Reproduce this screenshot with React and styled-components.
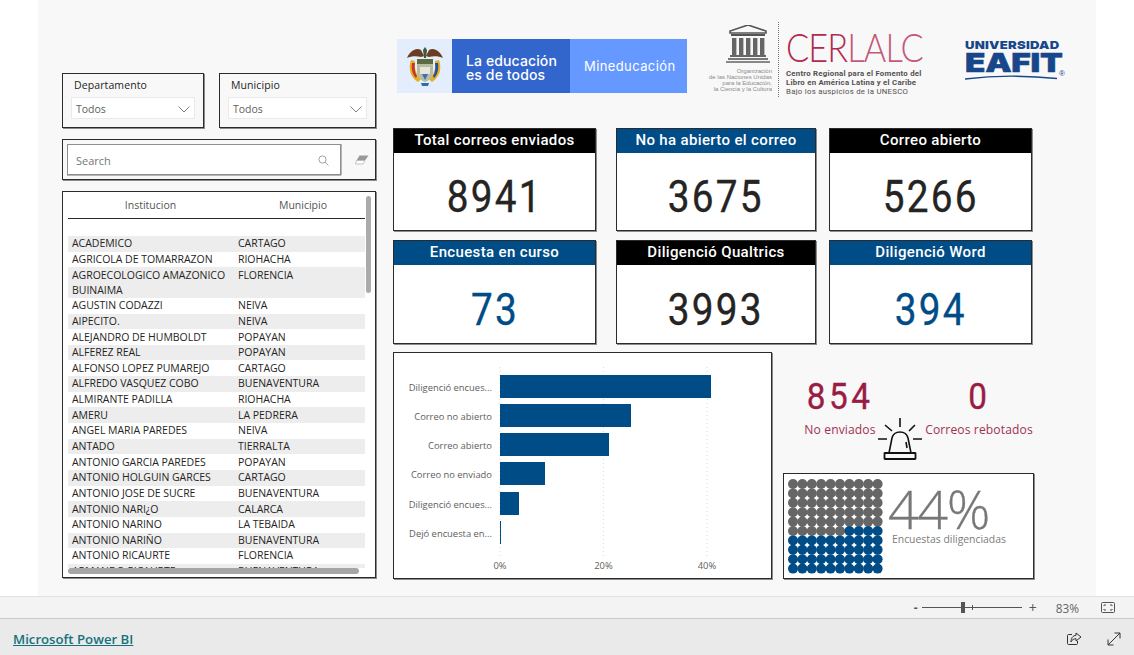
import React from "react";
import styled, { createGlobalStyle } from "styled-components";

const Global = createGlobalStyle`
  html, body { margin: 0; padding: 0; background: #fff; }
  body { font-family: "Open Sans", "Noto Sans", sans-serif; overflow: hidden; }
  * { box-sizing: border-box; }
`;

const BLUE = "#004c87";
const INK = "#252423";
const CRIMSON = "#9b1c43";
const DIN = `"Roboto", "Liberation Sans", sans-serif`;

const Page = styled.div`
  width: 1134px; height: 655px; display: flex; flex-direction: column; overflow: hidden;
`;
const ReportArea = styled.div`height: 596px; flex: none; background: #fff; padding: 0 38px;`;
const Canvas = styled.div`
  width: 1058px; height: 596px; background: #f8f8f8; padding-left: 24px;
  display: grid; grid-template-columns: 314px 1fr; column-gap: 17px;
`;
const LeftCol = styled.div`padding-top: 73px; display: flex; flex-direction: column; gap: 11px;`;
const RightCol = styled.div`padding-top: 22px; display: flex; flex-direction: column;`;

const Frame = styled.div`
  border: 1px solid #2b2b2b;
  box-shadow: 1px 1px 0 #8c8c8c;
`;

/* slicers */
const FilterRow = styled.div`display: flex; gap: 15px;`;
const Filter = styled(Frame)`
  width: ${p => p.$w}px; height: 55px; padding: 4px 8px 0 8px; display: flex; flex-direction: column;
`;
const FilterTitle = styled.div`font-size: 10.5px; line-height: 15px; color: ${INK}; padding-left: 3px; height: 19px; letter-spacing: .1px;`;
const Select = styled.div`
  height: 22px; background: #fff; border: 1px solid #eaeaea; display: flex; align-items: center;
  justify-content: space-between; padding: 2px 4px 0 4px; font-size: 10.5px; color: #605e5c;
`;
const SearchFrame = styled(Frame)`height: 41px; padding: 4px; display: flex; align-items: center; gap: 7px;`;
const SearchBox = styled.div`
  width: 274px; height: 31px; background: #fff; border: 1px solid #8f8f8f; box-shadow: 0 1px 0 #b5b5b5, 1px 0 0 #b5b5b5;
  display: flex; align-items: center; justify-content: space-between; padding: 1px 11px 0 8px;
  font-size: 11px; color: #777;
`;

/* table */
const TableFrame = styled(Frame)`height: 387px; background: #fff; position: relative; padding: 0 10px 0 5px; overflow: hidden;`;
const HeadRow = styled.div`
  display: grid; grid-template-columns: 165px 1fr; height: 27px; border-bottom: 1px solid #2b2b2b;
  font-size: 10.5px; color: #555; align-items: center;
`;
const HeadCell = styled.div`text-align: center; padding-bottom: 1px; padding-left: ${p => p.$pl || 0}px;`;
const Rows = styled.div`margin-top: 17px; height: 332px; overflow: hidden;`;
const Row = styled.div`
  display: grid; grid-template-columns: 166px 1fr; padding: .3px 4px .35px; font-size: 10.5px; line-height: 15px;
  color: ${INK}; background: ${p => (p.$odd ? "#ededed" : "#fff")};
  white-space: pre-line; letter-spacing: -.03px;
`;
const VScroll = styled.div`position: absolute; left: 303px; top: 4px; width: 5px; height: 97px; background: #ababab; border-radius: 3px;`;
const HScroll = styled.div`position: absolute; left: 5px; top: 376px; width: 291px; height: 6px; background: #a6a6a6; border-radius: 3px;`;

/* logos */
const LogoRow = styled.div`height: 106px; display: flex; align-items: flex-start; padding-left: 4px;`;
const MinLogo = styled.div`margin-top: 17px; width: 290px; height: 54px; display: grid; grid-template-columns: 55px 118px 117px; color: #fff; font-family: "Inter", sans-serif;`;
const CrestPane = styled.div`background: #e3edfd; display: flex; align-items: center; justify-content: center;`;
const SloganPane = styled.div`background: #3366cc; padding: 14.500px 0 0 14px; font-size: 14px; line-height: 14.500px; font-weight: 500; white-space: pre-line; letter-spacing: .12px;`;
const MinPane = styled.div`background: #6699ff; display: flex; align-items: center; padding-left: 14px; font-size: 13px; font-weight: 400; letter-spacing: .4px;`;

const Cerlalc = styled.div`margin-left: 23px; width: 215px; display: grid; grid-template-columns: 62px 1fr; column-gap: 14px; height: 75px; position: relative;`;
const UnescoCol = styled.div`display: flex; flex-direction: column; align-items: flex-end; padding-top: 3px; svg { margin-right: 2px; }`;
const UnescoNote = styled.div`
  flex: none; width: 80px; margin-top: 5px; text-align: right; font-family: "Liberation Sans", sans-serif; font-size: 6px; line-height: 6.100px; color: #8a8a8a; white-space: pre-line;
`;
const DotLine = styled.div`position: absolute; left: 68px; top: 0; height: 75px; border-left: 1px dotted #777;`;
const CerlalcBody = styled.div`display: flex; flex-direction: column; min-width: 0;`;
const CerlalcWord = styled.div`
  font-family: "Lato", "Liberation Sans", sans-serif; font-weight: 300; font-size: 39px; line-height: 40px; margin-top: 5px; height: 42px; letter-spacing: -1px;
  color: #b22a52; white-space: nowrap; transform: scaleX(.88); transform-origin: left center;
  span { color: #c4587a; }
`;
const CerlalcText = styled.div`
  font-family: ${DIN}; font-size: 7.800px; line-height: 9px; color: #55504f; font-weight: 700; white-space: pre-line; letter-spacing: .24px;
  em { font-style: normal; font-weight: 400; display: block; letter-spacing: .28px; }
`;
const Eafit = styled.div`
  margin-left: 40px; margin-top: 18px; width: 100px; color: #17468a; position: relative;
`;
const EafitTop = styled.div`font-family: "Inter", sans-serif; font-weight: 900; font-size: 11px; line-height: 11px; letter-spacing: .2px; white-space: nowrap; transform: scaleX(1.19); transform-origin: left center;`;
const EafitMain = styled.div`
  font-family: "Inter", sans-serif; font-weight: 900; font-size: 26px; line-height: 23px; letter-spacing: -.2px; transform: scaleX(1.28); transform-origin: left center; -webkit-text-stroke: .5px #17468a; white-space: nowrap;
`;
const Reg = styled.span`position: absolute; right: 0; top: 29px; font-family: "Liberation Sans", sans-serif; font-size: 8px;`;

/* KPI */
const KpiGrid = styled.div`display: grid; grid-template-columns: 223px 213px 203px; row-gap: 9px; grid-template-rows: 103px 104px;`;
const Kpi = styled(Frame)`background: #fff; display: flex; flex-direction: column; width: ${p => p.$w}px;`;
const KpiHead = styled.div`
  height: 24px; flex: none; background: ${p => (p.$blue ? BLUE : "#000")}; color: #fff; text-align: center;
  font-family: ${DIN}; font-weight: 500; font-size: 15px; line-height: 22px; letter-spacing: .35px; white-space: nowrap;
`;
const KpiValue = styled.div`
  flex: 1; display: flex; align-items: center; justify-content: center; padding-top: 10px;
  font-family: ${DIN}; font-weight: 400; font-size: 45px; letter-spacing: 2.600px; color: ${p => (p.$blue ? BLUE : INK)};
  -webkit-text-stroke: .35px currentColor;
  span { display: inline-block; transform: scaleX(.86); }
`;

/* bottom */
const Bottom = styled.div`margin-top: 8px; display: flex; gap: 11px; align-items: flex-start;`;
const ChartFrame = styled(Frame)`width: 379px; height: 227px; background: #fff; line-height: 0;`;
const SideCol = styled.div`width: 251px; display: flex; flex-direction: column;`;
const Stats = styled.div`height: 121px; position: relative; display: grid; grid-template-columns: 114px 164px; padding-top: 21px;`;
const Stat = styled.div`text-align: center; color: ${CRIMSON};`;
const StatValue = styled.div`
  font-family: ${DIN}; font-size: 37px; line-height: 47px; letter-spacing: 4px; font-weight: 400; -webkit-text-stroke: .35px currentColor;
  span { display: inline-block; transform: scaleX(.9); }
`;
const StatLabel = styled.div`font-size: 12.100px; line-height: 16px; margin-top: 2px; white-space: nowrap; opacity: .92; letter-spacing: .12px;`;
const Siren = styled.svg`position: absolute; left: 95px; top: 66px;`;
const WaffleFrame = styled(Frame)`height: 106px; background: #fff; display: flex; padding: 5px 0 0 4px; gap: 5px;`;
const WaffleCopy = styled.div`color: #7b7b7b; display: flex; flex-direction: column;`;
const Percent = styled.div`font-family: "Open Sans", sans-serif; font-weight: 300; font-size: 54px; line-height: 52px; letter-spacing: -1.500px; margin-top: 3px; color: #777; -webkit-text-stroke: .3px #777;`;
const PercentLabel = styled.div`font-size: 10.400px; line-height: 14px; margin-left: 4px; margin-top: -2px;`;

/* chrome */
const StatusBar = styled.div`
  height: 23px; flex: none; background: #f3f3f3; border-top: 1px solid #e1e1e1; border-bottom: 1px solid #c9c9c9;
  display: flex; align-items: center; justify-content: flex-end; padding-right: 19px; color: #555;
`;
const Zoomer = styled.div`display: flex; align-items: center; gap: 4px; font-size: 12px;`;
const ZoomMinus = styled.span`font-weight: 700;`;
const ZoomPlus = styled.span`margin-left: 3px; font-size: 14px;`;
const Track = styled.div`width: 100px; height: 1px; background: #555; position: relative;`;
const Thumb = styled.div`position: absolute; left: 39px; top: -5px; width: 4px; height: 11px; background: #555;`;
const Tick = styled.div`position: absolute; left: 50px; top: -2px; width: 1px; height: 5px; background: #555;`;
const Pct = styled.div`font-size: 11.800px; margin: 0 18px 0 15px; color: #666;`;
const Footer = styled.div`
  flex: 1; background: #eaeaea; display: flex; align-items: center; justify-content: space-between; padding: 3px 13px 0 13px;
`;
const BiLink = styled.a`font-size: 13.200px; font-weight: 600; color: #14727c; text-decoration: underline;`;
const FooterIcons = styled.div`display: flex; gap: 25px; align-items: center; line-height: 0;`;
const EraserIcon = styled.svg`margin-left: 7px;`;
const LogoArc = styled.svg`display: block;`;

const rows = [
  ["ACADEMICO", "CARTAGO"], ["AGRICOLA DE TOMARRAZON", "RIOHACHA"], ["AGROECOLOGICO AMAZONICO\nBUINAIMA", "FLORENCIA"],
  ["AGUSTIN CODAZZI", "NEIVA"], ["AIPECITO.", "NEIVA"], ["ALEJANDRO DE HUMBOLDT", "POPAYAN"], ["ALFEREZ REAL", "POPAYAN"],
  ["ALFONSO LOPEZ PUMAREJO", "CARTAGO"], ["ALFREDO VASQUEZ COBO", "BUENAVENTURA"], ["ALMIRANTE PADILLA", "RIOHACHA"],
  ["AMERU", "LA PEDRERA"], ["ANGEL MARIA PAREDES", "NEIVA"], ["ANTADO", "TIERRALTA"], ["ANTONIO GARCIA PAREDES", "POPAYAN"],
  ["ANTONIO HOLGUIN GARCES", "CARTAGO"], ["ANTONIO JOSE DE SUCRE", "BUENAVENTURA"], ["ANTONIO NARI¿O", "CALARCA"],
  ["ANTONIO NARINO", "LA TEBAIDA"], ["ANTONIO NARIÑO", "BUENAVENTURA"], ["ANTONIO RICAURTE", "FLORENCIA"], ["ARMANDO RICAURTE", "BUENAVENTURA"],
];

const kpis = [
  ["Total correos enviados", "8941", false, false, 203],
  ["No ha abierto el correo", "3675", true, false, 200],
  ["Correo abierto", "5266", false, false, 203],
  ["Encuesta en curso", "73", true, true, 203],
  ["Diligenció Qualtrics", "3993", false, false, 200],
  ["Diligenció Word", "394", true, true, 203],
];

const bars = [
  ["Diligenció encues...", 211, 23], ["Correo no abierto", 131, 52], ["Correo abierto", 109, 81],
  ["Correo no enviado", 45, 110], ["Diligenció encues...", 19, 140], ["Dejó encuesta en...", 1, 169],
];

const Chevron = () => (
  <svg width="12" height="7" viewBox="0 0 12 7" fill="none" stroke="#808080" strokeWidth="1"><path d="M.5.5 6 6l5.500-5.500" /></svg>
);

const Crest = () => (
  <svg width="38" height="42" viewBox="0 0 38 42">
    <path d="M1 13C4 6 10 2 15 5l3 6-3 1C11 11 5 11 1 13Z" fill="#6b3d22" />
    <path d="M37 13C34 6 28 2 23 5l-3 6 3 1c4-1 10-1 14 1Z" fill="#6b3d22" />
    <path d="M19 2l2 3-1 8h-2l-1-8Z" fill="#3e5a3a" />
    <path d="M5 15c-3 8-1 17 7 22l3-3c-5-4-7-11-6-18Z" fill="#e2b11f" />
    <path d="M33 15c3 8 1 17-7 22l-3-3c5-4 7-11 6-18Z" fill="#e2b11f" />
    <path d="M6 18c-1 7 1 12 4 15l1-2c-2-3-3-8-2-13Z" fill="#c9342b" />
    <path d="M32 18c1 7-1 12-4 15l-1-2c2-3 3-8 2-13Z" fill="#2b4d9b" />
    <path d="M11 14h16v14c0 5-4 7-8 9-4-2-8-4-8-9Z" fill="#b7bda2" />
    <rect x="11" y="14" width="16" height="5" fill="#5b6b42" />
    <rect x="14" y="22" width="10" height="7" fill="#e8e6da" />
    <path d="M16 29h6l-3 6Z" fill="#3f6fb0" />
    <path d="M15 38h8l-1 3h-6Z" fill="#2f6ea5" />
  </svg>
);

const Temple = () => (
  <svg width="44" height="38" viewBox="0 0 44 38">
    <path d="M22 0 4 6v2h36V6Z" fill="none" stroke="#555" strokeWidth="1.600" />
    <path d="M5 9h34v2H5z" fill="#555" />
    {[6, 13, 20, 27, 34].map(x => <rect key={x} x={x} y="13" width="4.400" height="17" fill="#666" />)}
    <rect x="4" y="30" width="36" height="2" fill="#666" />
    <rect x="2" y="33" width="40" height="2" fill="#777" />
    <rect x="0" y="36" width="44" height="2" fill="#888" />
  </svg>
);

const Chart = () => (
  <svg width="377" height="225" viewBox="0 0 377 225" fontFamily="Open Sans, sans-serif" fontSize="9.400">
    {[106, 209.5, 313].map(x => (
      <line key={x} x1={x} x2={x} y1="14" y2="203" stroke="#d9d9d9" strokeDasharray="1 3" />
    ))}
    {bars.map(([label, w, y]) => (
      <g key={y}>
        <rect x="106" y={y - 1} width={w} height="23" fill={BLUE} />
        <text x="98" y={y + 15} textAnchor="end" fill="#605e5c">{label}</text>
      </g>
    ))}
    {[[106, "0%"], [209.5, "20%"], [313, "40%"]].map(([x, t]) => (
      <text key={t} x={x} y="216" textAnchor="middle" fill="#605e5c">{t}</text>
    ))}
  </svg>
);

const Waffle = () => {
  const dots = [];
  for (let r = 0; r < 10; r++) for (let c = 0; c < 10; c++) {
    const blue = r > 5 || (r === 5 && c >= 6);
    dots.push(<circle key={`${r}-${c}`} cx={5 + c * 9.4} cy={5 + r * 9.4} r="5" fill={blue ? BLUE : "#666"} />);
  }
  return <svg width="95" height="95" viewBox="0 0 95 95">{dots}</svg>;
};

export default function App() {
  return (
    <Page>
      <Global />
      <ReportArea>
        <Canvas>
          <LeftCol>
            <FilterRow>
              <Filter $w={142}>
                <FilterTitle>Departamento</FilterTitle>
                <Select>Todos <Chevron /></Select>
              </Filter>
              <Filter $w={157}>
                <FilterTitle>Municipio</FilterTitle>
                <Select>Todos <Chevron /></Select>
              </Filter>
            </FilterRow>
            <SearchFrame>
              <SearchBox>
                Search
                <svg width="11" height="11" viewBox="0 0 11 11" fill="none" stroke="#a3a3a3" strokeWidth="1"><circle cx="4.500" cy="4.500" r="3.600" /><path d="m7.200 7.200 3.200 3.200" /></svg>
              </SearchBox>
              <EraserIcon width="14" height="10" viewBox="0 0 14 10"><path d="M4.500.5H13.500L10 5.500H1.500Z" fill="#999" /><path d="M1.500 5.500H10L8 9H.5Z" fill="#fff" stroke="#aaa" strokeWidth=".7" /></EraserIcon>
            </SearchFrame>
            <TableFrame>
              <HeadRow>
                <HeadCell>Institucion</HeadCell>
                <HeadCell $pl={8}>Municipio</HeadCell>
              </HeadRow>
              <Rows>
                {rows.map(([a, b], i) => (
                  <Row key={a} $odd={i % 2 === 0}><span>{a}</span><span>{b}</span></Row>
                ))}
              </Rows>
              <VScroll />
              <HScroll />
            </TableFrame>
          </LeftCol>
          <RightCol>
            <LogoRow>
              <MinLogo>
                <CrestPane><Crest /></CrestPane>
                <SloganPane>{"La educación\nes de todos"}</SloganPane>
                <MinPane>Mineducación</MinPane>
              </MinLogo>
              <Cerlalc>
                <UnescoCol>
                  <Temple />
                  <UnescoNote>{"Organización\nde las Naciones Unidas\npara la Educación,\nla Ciencia y la Cultura"}</UnescoNote>
                </UnescoCol>
                <DotLine />
                <CerlalcBody>
                  <CerlalcWord>CER<span>LALC</span></CerlalcWord>
                  <CerlalcText>{"Centro Regional para el Fomento del\nLibro en América Latina y el Caribe"}<em>Bajo los  auspicios de la UNESCO</em></CerlalcText>
                </CerlalcBody>
              </Cerlalc>
              <Eafit>
                <EafitTop>UNIVERSIDAD</EafitTop>
                <EafitMain>EAFIT</EafitMain>
                <LogoArc width="92" height="6" viewBox="0 0 92 6"><path d="M0 5C28 1.500 62 1.500 92 4.500" fill="none" stroke="#17468a" strokeWidth="1.400" /></LogoArc>
                <Reg>®</Reg>
              </Eafit>
            </LogoRow>
            <KpiGrid>
              {kpis.map(([title, value, headBlue, valueBlue, w]) => (
                <Kpi key={title} $w={w}>
                  <KpiHead $blue={headBlue}>{title}</KpiHead>
                  <KpiValue $blue={valueBlue}><span>{value}</span></KpiValue>
                </Kpi>
              ))}
            </KpiGrid>
            <Bottom>
              <ChartFrame><Chart /></ChartFrame>
              <SideCol>
                <Stats>
                  <Stat>
                    <StatValue><span>854</span></StatValue>
                    <StatLabel>No enviados</StatLabel>
                  </Stat>
                  <Stat>
                    <StatValue><span>0</span></StatValue>
                    <StatLabel>Correos rebotados</StatLabel>
                  </Stat>
                  <Siren width="44" height="44" viewBox="0 0 44 44" fill="none" stroke="#111" strokeWidth="1.600">
                    <path d="M22 0v9M7 7l7 6M37 7l-6 6M0 21h9M35 21h9" />
                    <path d="M11 35l3-15c1-4 4-6 8-6s7 2 8 6l3 15" />
                    <path d="M28 24l1 6" />
                    <rect x="6.500" y="35" width="31" height="6" rx=".5" strokeWidth="1.800" />
                  </Siren>
                </Stats>
                <WaffleFrame>
                  <Waffle />
                  <WaffleCopy>
                    <Percent>44%</Percent>
                    <PercentLabel>Encuestas diligenciadas</PercentLabel>
                  </WaffleCopy>
                </WaffleFrame>
              </SideCol>
            </Bottom>
          </RightCol>
        </Canvas>
      </ReportArea>
      <StatusBar>
        <Zoomer>
          <ZoomMinus>-</ZoomMinus>
          <Track><Thumb /><Tick /></Track>
          <ZoomPlus>+</ZoomPlus>
          <Pct>83%</Pct>
          <svg width="14" height="11" viewBox="0 0 14 11" fill="none" stroke="#555"><rect x=".5" y=".5" width="13" height="10" rx="1" /><path d="M3 4V3h2M11 4V3H9M3 7v1h2M11 7v1H9" /></svg>
        </Zoomer>
      </StatusBar>
      <Footer>
        <BiLink href="#">Microsoft Power BI</BiLink>
        <FooterIcons>
          <svg width="15" height="14" viewBox="0 0 15 14" fill="none" stroke="#333"><path d="M5 2.500H1.500a1 1 0 0 0-1 1v8a1 1 0 0 0 1 1h8a1 1 0 0 0 1-1V9" /><path d="M9 1l5 4-5 4V6.700C6.500 6.700 5 8 4 10c0-4 2-6.500 5-6.700Z" /></svg>
          <svg width="14" height="14" viewBox="0 0 14 14" fill="none" stroke="#333"><path d="M1 13 13 1M7.500 1H13v5.500M1 7.500V13h5.500" /></svg>
        </FooterIcons>
      </Footer>
    </Page>
  );
}
